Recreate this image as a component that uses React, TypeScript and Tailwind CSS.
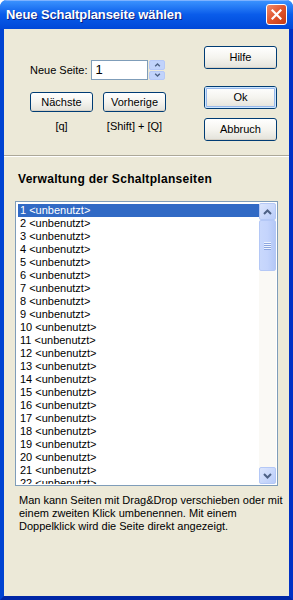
import React from "react";

const font = { fontFamily: '"Liberation Sans", Tahoma, Arial, sans-serif' };

function XPButton({ label, def = false, className = "" }: { label: string; def?: boolean; className?: string }) {
  return (
    <div
      className={`flex items-center justify-center rounded-[3px] border border-[#003C74] bg-gradient-to-b from-[#FFFFFF] via-[#F5F4EF] to-[#E3E2DA] text-[11px] text-black ${className}`}
    >
      <div
        className={`flex h-full w-full items-center justify-center rounded-[2px] ${
          def ? "shadow-[inset_0_0_0_1px_#CEE7FF,inset_0_0_0_2px_#98B8EA]" : "shadow-[inset_0_-1px_0_#D6D0C5]"
        }`}
      >
        {label}
      </div>
    </div>
  );
}

function ArrowUp({ small = false }: { small?: boolean }) {
  return (
    <svg width={small ? 7 : 9} height={small ? 4 : 6} viewBox="0 0 9 6">
      <path d="M1 5 L4.5 1.5 L8 5" fill="none" stroke="#4D6185" strokeWidth="2" />
    </svg>
  );
}
function ArrowDown({ small = false }: { small?: boolean }) {
  return (
    <svg width={small ? 7 : 9} height={small ? 4 : 6} viewBox="0 0 9 6">
      <path d="M1 1 L4.5 4.5 L8 1" fill="none" stroke="#4D6185" strokeWidth="2" />
    </svg>
  );
}

export default function App() {
  const items = Array.from({ length: 22 }, (_, i) => `${i + 1} <unbenutzt>`);
  return (
    <div className="h-[600px] w-[293px] overflow-hidden" style={font}>
      <div className="flex h-full w-full flex-col overflow-hidden rounded-t-[7px] bg-[#0054E3]">
        {/* Title bar */}
        <div className="flex h-[29px] shrink-0 items-center justify-between bg-gradient-to-b from-[#3D95FF] via-[#0A5CEA] to-[#0048D8] pl-[6px] pr-[6px] shadow-[inset_0_1px_0_#7DB2FF]">
          <span className="text-[13px] font-bold tracking-[-0.1px] text-white [text-shadow:1px_1px_0_#0A1E80]">
            Neue Schaltplanseite wählen
          </span>
          <div className="flex h-[21px] w-[21px] items-center justify-center rounded-[3px] border border-white bg-gradient-to-br from-[#F08A6A] via-[#E0542B] to-[#C43A12]">
            <svg width="11" height="11" viewBox="0 0 11 11">
              <path d="M1.5 1.5 L9.5 9.5 M9.5 1.5 L1.5 9.5" stroke="white" strokeWidth="2.2" strokeLinecap="square" />
            </svg>
          </div>
        </div>
        {/* Body with frame */}
        <div className="flex min-h-0 flex-1 border-b-[4px] border-l-[4px] border-r-[4px] border-b-[#0026A6] border-l-[#0043D2] border-r-[#0031C5]">
          <div className="flex w-full flex-col bg-[#ECE9D8] text-[11px] text-black">
            {/* Top section */}
            <div className="flex h-[126px] shrink-0">
              <div className="flex w-[200px] flex-col pl-[26px] pt-[31px]">
                <div className="flex items-center">
                  <span className="mr-[4px]">Neue Seite:</span>
                  <div className="flex h-[20px] w-[57px] items-center border border-[#7F9DB9] bg-white pl-[3px] text-[13px]">1</div>
                  <div className="ml-[1px] flex h-[20px] w-[16px] flex-col gap-[1px]">
                    <div className="flex flex-1 items-center justify-center rounded-[2px] border border-[#B6C9F7] bg-[#C1D3FB]">
                      <ArrowUp small />
                    </div>
                    <div className="flex flex-1 items-center justify-center rounded-[2px] border border-[#B6C9F7] bg-[#C1D3FB]">
                      <ArrowDown small />
                    </div>
                  </div>
                </div>
                <div className="mt-[12px] flex gap-[10px]">
                  <XPButton label="Nächste" className="h-[20px] w-[63px]" />
                  <XPButton label="Vorherige" className="h-[20px] w-[63px]" />
                </div>
                <div className="mt-[6px] flex gap-[10px]">
                  <span className="w-[63px] text-center">[q]</span>
                  <span className="w-[63px] text-center">[Shift] + [Q]</span>
                </div>
              </div>
              <div className="flex flex-col pt-[17px]">
                <XPButton label="Hilfe" className="h-[23px] w-[73px]" />
                <XPButton label="Ok" def className="mt-[17px] h-[23px] w-[73px]" />
                <XPButton label="Abbruch" className="mt-[9px] h-[23px] w-[73px]" />
              </div>
            </div>
            {/* separator */}
            <div className="h-[1px] shrink-0 bg-[#ACA899]" />
            <div className="h-[1px] shrink-0 bg-white" />
            {/* bottom section */}
            <div className="flex flex-col px-[11px] pt-[15px]">
              <div className="pl-[3px] text-[12px] font-bold leading-[14px] tracking-[0.3px]">Verwaltung der Schaltplanseiten</div>
              <div className="mt-[15px] flex h-[285px] border border-[#7F9DB9] bg-white p-[1px]">
                <div className="flex-1 overflow-hidden pl-[1px] pt-[1px]">
                  {items.map((t, i) => (
                    <div
                      key={i}
                      className={`h-[13px] whitespace-nowrap pl-[2px] text-[11px] leading-[13px] ${i === 0 ? "bg-[#316AC5] text-white" : ""}`}
                    >
                      {t}
                    </div>
                  ))}
                </div>
                <div className="flex w-[17px] flex-col bg-[#FAF9F5]">
                  <div className="flex h-[17px] items-center justify-center rounded-[2px] border border-[#B4C8F6] bg-gradient-to-br from-[#DCE6FD] to-[#B9CCF9]">
                    <ArrowUp />
                  </div>
                  <div className="flex h-[51px] items-center justify-center rounded-[2px] border border-[#B4C8F6] bg-gradient-to-r from-[#C9D8FC] via-[#C4D4FC] to-[#B4C8F6]">
                    <div className="flex flex-col gap-[1px]">
                      <div className="h-[1px] w-[7px] bg-[#EEF4FE] shadow-[0_1px_0_#8CA5E0]" />
                      <div className="h-[1px] w-[7px] bg-[#EEF4FE] shadow-[0_1px_0_#8CA5E0]" />
                      <div className="h-[1px] w-[7px] bg-[#EEF4FE] shadow-[0_1px_0_#8CA5E0]" />
                      <div className="h-[1px] w-[7px] bg-[#EEF4FE] shadow-[0_1px_0_#8CA5E0]" />
                    </div>
                  </div>
                  <div className="flex-1" />
                  <div className="flex h-[17px] items-center justify-center rounded-[2px] border border-[#B4C8F6] bg-gradient-to-br from-[#DCE6FD] to-[#B9CCF9]">
                    <ArrowDown />
                  </div>
                </div>
              </div>
              <div className="mt-[8px] whitespace-nowrap pl-[4px] text-[11px] leading-[13px]">
                Man kann Seiten mit Drag&amp;Drop verschieben oder mit
                <br />
                einem zweiten Klick umbenennen. Mit einem
                <br />
                Doppelklick wird die Seite direkt angezeigt.
              </div>
            </div>
          </div>
        </div>
      </div>
    </div>
  );
}
